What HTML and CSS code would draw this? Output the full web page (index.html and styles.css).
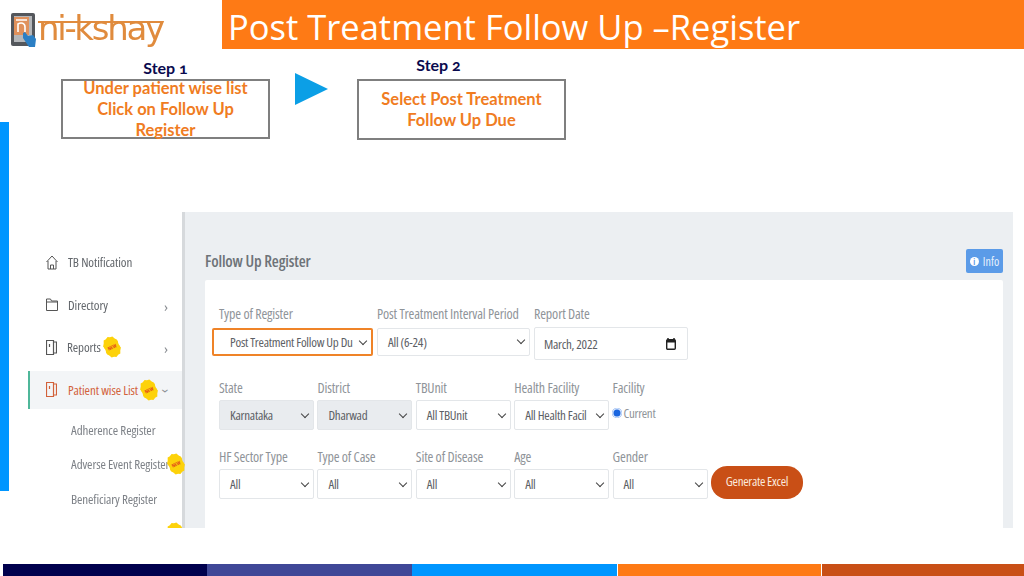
FILE: index.html
```html
<!DOCTYPE html>
<html lang="en">
<head>
    <meta charset="UTF-8">
    <title>Post Treatment Follow Up Register</title>
    <link rel="stylesheet" href="styles.css">
</head>
<body>
    <div class="slide">
        <div class="side-bar"></div>

        <header class="top">
            <div class="logo">
                <svg class="logo-tablet" width="27" height="36" viewBox="0 0 27 36">
                    <rect x="0" y="1" width="24" height="33" rx="2" fill="#54575c"/>
                    <rect x="3" y="4" width="18" height="26" fill="#b5b7ba"/>
                    <rect x="3" y="5" width="15" height="18" fill="#e0915c"/>
                    <path d="M5 8h11M7 20v-8c3-2 7-1 7 3v5" fill="none" stroke="#fff" stroke-width="1.600"/>
                    <path d="M12 21l2-1 3 4 5-1 3 4-1 8h-6l-6-9z" fill="#2b7fc4"/>
                </svg>
                <span class="logo-text">ni-kshay</span>
            </div>
            <h1 class="title">Post Treatment Follow Up –Register</h1>
        </header>

        <section class="steps">
            <div class="step step-one">
                <div class="step-label">Step 1</div>
                <div class="step-box"><p>Under patient wise list<br>Click on Follow Up<br>Register</p></div>
            </div>
            <div class="arrow"></div>
            <div class="step step-two">
                <div class="step-label">Step 2</div>
                <div class="step-box"><p>Select Post Treatment<br>Follow Up Due</p></div>
            </div>
        </section>

        <section class="shot">
            <nav class="menu">
                <div class="menu-item">
                    <svg class="menu-icon" width="12" height="15" viewBox="0 0 12 15"><path d="M.5 7L6 1l5.500 6M2 6v8h8V6M4.500 14v-4h3v4" fill="none" stroke="#555" stroke-width="1"/></svg>
                    <span>TB Notification</span>
                </div>
                <div class="menu-item">
                    <svg class="menu-icon" width="12" height="13" viewBox="0 0 12 13"><path d="M.5 12.500V1h4l1 2h6v9.500zM.5 4h11" fill="none" stroke="#555" stroke-width="1"/></svg>
                    <span>Directory</span>
                    <i class="chev">›</i>
                </div>
                <div class="menu-item">
                    <svg class="menu-icon" width="11" height="15" viewBox="0 0 11 15"><path d="M.5.500h7v14h-7zM7.500 2h3v11h-3M3.500 4v3" fill="none" stroke="#555" stroke-width="1.200"/></svg>
                    <span>Reports</span>
                    <b class="new-badge">NEW</b>
                    <i class="chev">›</i>
                </div>
                <div class="menu-item menu-active">
                    <svg class="menu-icon" width="11" height="15" viewBox="0 0 11 15"><path d="M.5.500h7v14h-7zM7.500 2h3v11h-3M3.500 4v3" fill="none" stroke="#d2613a" stroke-width="1.200"/></svg>
                    <span>Patient wise List</span>
                    <b class="new-badge">NEW</b>
                    <i class="chev chev-down">›</i>
                </div>
                <div class="sub-item sub-first">Adherence Register</div>
                <div class="sub-item">Adverse Event Register<b class="new-badge over">NEW</b></div>
                <div class="sub-item">Beneficiary Register</div>
                <div class="sub-item"><b class="new-badge over"></b></div>
            </nav>

            <main class="content">
                <div class="content-head">
                    <h2>Follow Up Register</h2>
                    <button class="info-btn"><span class="info-dot">i</span>Info</button>
                </div>
                <div class="card">
                    <div class="row row-top">
                        <div class="field field-type">
                            <label>Type of Register</label>
                            <div class="select select-mark"><span>Post Treatment Follow Up Du</span></div>
                        </div>
                        <div class="field field-wide">
                            <label>Post Treatment Interval Period</label>
                            <div class="select"><span>All (6-24)</span></div>
                        </div>
                        <div class="field field-date">
                            <label>Report Date</label>
                            <div class="date-box">
                                <span>March, 2022</span>
                                <svg width="10" height="12" viewBox="0 0 10 12"><path d="M2 0v2M8 0v2" stroke="#222" stroke-width="1.500"/><rect x=".7" y="1.700" width="8.600" height="9.600" rx="1" fill="none" stroke="#222" stroke-width="1.400"/><rect x="1" y="2" width="8" height="2.500" fill="#222"/></svg>
                            </div>
                        </div>
                    </div>
                    <div class="row row-mid">
                        <div class="field"><label>State</label><div class="select select-off"><span>Karnataka</span></div></div>
                        <div class="field"><label>District</label><div class="select select-off"><span>Dharwad</span></div></div>
                        <div class="field"><label>TBUnit</label><div class="select"><span>All TBUnit</span></div></div>
                        <div class="field"><label>Health Facility</label><div class="select"><span>All Health Facil</span></div></div>
                        <div class="field">
                            <label>Facility</label>
                            <div class="radio-line"><i class="radio"></i><span>Current</span></div>
                        </div>
                    </div>
                    <div class="row">
                        <div class="field"><label>HF Sector Type</label><div class="select"><span>All</span></div></div>
                        <div class="field"><label>Type of Case</label><div class="select"><span>All</span></div></div>
                        <div class="field"><label>Site of Disease</label><div class="select"><span>All</span></div></div>
                        <div class="field"><label>Age</label><div class="select"><span>All</span></div></div>
                        <div class="field"><label>Gender</label><div class="select"><span>All</span></div></div>
                        <button class="excel-btn">Generate Excel</button>
                    </div>
                </div>
            </main>
        </section>

        <footer class="stripes">
            <span class="s1"></span><span class="s2"></span><span class="s3"></span><span class="s4"></span><span class="s5"></span>
        </footer>
    </div>
</body>
</html>
```

FILE: styles.css
```css
* {
  margin: 0;
  padding: 0;
  box-sizing: border-box;
}
body {
  background: #fff;
  overflow: hidden;
}
.slide {
  position: relative;
  width: 1024px;
  height: 576px;
  overflow: hidden;
  font-family: "Open Sans", sans-serif;
}
.side-bar {
  position: absolute;
  left: 0;
  top: 122px;
  width: 9px;
  height: 369px;
  background: #0096ff;
}

/* header */
.top {
  display: flex;
  height: 49px;
}
.logo {
  display: flex;
  width: 222px;
  padding: 12px 0 0 11px;
  filter: blur(.4px);
}
.logo-text {
  position: relative;
  height: 44px;
  margin: -6px 0 0 0;
  font-family: "DejaVu Sans", sans-serif;
  font-size: 34px;
  line-height: 44px;
  letter-spacing: -2.300px;
  color: #e08b3d;
}
.logo-text::before {
  content: "";
  position: absolute;
  left: 0;
  right: 0;
  top: 15px;
  height: 2px;
  background: #e08b3d;
}
.title {
  flex: 1;
  height: 49px;
  padding: 4px 0 0 6px;
  background: #fe7a15;
  color: #fff;
  font-size: 34.500px;
  font-weight: 400;
  line-height: 45px;
  white-space: nowrap;
}

/* steps */
.steps {
  display: flex;
  align-items: flex-start;
  height: 163px;
  padding: 10px 0 0 61px;
  font-family: "Lato", sans-serif;
}
.step {
  width: 209px;
}
.step-label {
  padding-bottom: 2px;
  text-align: center;
  color: #0a0a4e;
  font-size: 16px;
  font-weight: 700;
  line-height: 18px;
  font-variant-numeric: oldstyle-nums;
}
.step-two .step-label {
  margin: -3px 46px 0 0;
  padding-bottom: 5px;
}
.step-box {
  height: 60px;
  border: 2px solid #7f7f7f;
  text-align: center;
  color: #f07c22;
  font-size: 16.500px;
  font-weight: 700;
  line-height: 21px;
  white-space: nowrap;
}
.step-box p {
  margin-top: -3px;
}
.step-two .step-box {
  height: 61px;
  padding-top: 11px;
}
.arrow {
  width: 33px;
  height: 32px;
  margin: 14px 29px 0 25px;
  background: #0b9fe6;
  clip-path: polygon(0 0, 100% 50%, 0 100%);
}

/* embedded screenshot */
.shot {
  display: flex;
  width: 985px;
  height: 316px;
  margin-left: 28px;
  overflow: hidden;
  color: #6d7278;
  font-stretch: condensed;
  filter: blur(.35px);
}
.menu {
  position: relative;
  z-index: 1;
  width: 157px;
  flex-shrink: 0;
  border-right: 3px solid #d6d9dc;
  padding-top: 29px;
  font-size: 13px;
  letter-spacing: -.1px;
  color: #62666b;
}
.menu-item {
  display: flex;
  align-items: center;
  height: 42.500px;
  padding-left: 18px;
  position: relative;
}
.menu-icon {
  margin-right: 10px;
  flex-shrink: 0;
}
.menu-active {
  height: 38px;
  margin-top: 2px;
  border-left: 2px solid #4fb79a;
  padding-left: 16px;
  background: #f3f5f7;
  color: #d2613a;
}
.menu-active .menu-icon {
  margin-right: 11px;
}
.chev {
  position: absolute;
  left: 136px;
  top: 15px;
  font-style: normal;
  font-size: 15px;
  line-height: 14px;
  color: #8b8f94;
}
.menu-active .chev {
  left: 135px;
  top: 13px;
}
.chev-down {
  transform: rotate(90deg);
}
.new-badge {
  display: inline-block;
  width: 16px;
  height: 22px;
  margin-left: 3px;
  background: #fdd20a;
  color: #e2491a;
  font-size: 5px;
  letter-spacing: 0;
  line-height: 22px;
  text-align: center;
  flex-shrink: 0;
  transform: rotate(-25deg);
  clip-path: polygon(50% 0, 64% 6%, 80% 7%, 88% 20%, 100% 32%, 95% 50%, 100% 68%, 88% 80%, 80% 93%, 64% 94%, 50% 100%, 36% 94%, 20% 93%, 12% 80%, 0 68%, 5% 50%, 0 32%, 12% 20%, 20% 7%, 36% 6%);
}
.sub-item {
  position: relative;
  height: 34.500px;
  padding-left: 43px;
  line-height: 34.500px;
  white-space: nowrap;
  color: #7d8187;
}
.sub-first {
  margin-top: 4px;
}
.new-badge.over {
  position: absolute;
  left: 140px;
  top: 6px;
  margin: 0;
}
.content {
  flex: 1;
  background: #eceff2;
  padding: 0 10px 0 20px;
}
.content-head {
  display: flex;
  justify-content: space-between;
  height: 68px;
  padding-top: 37px;
}
.content-head h2 {
  font-size: 16px;
  font-weight: 600;
  line-height: 24px;
  letter-spacing: -.15px;
  color: #6e7378;
}
.info-btn {
  display: flex;
  align-items: center;
  justify-content: center;
  gap: 4px;
  width: 37px;
  height: 24px;
  border: 0;
  border-radius: 2px;
  background: #5b9be8;
  color: #e8f1fc;
  font: 400 12px "Open Sans", sans-serif;
  font-stretch: condensed;
}
.info-dot {
  width: 9px;
  height: 9px;
  border-radius: 50%;
  background: #fff;
  color: #5b9be8;
  font-size: 8px;
  font-weight: 700;
  line-height: 9px;
}
.card {
  height: 260px;
  padding: 23px 14px 0 14px;
  background: #fff;
  border-radius: 2px;
}
.row {
  display: flex;
  gap: 3.400px;
  font-size: 14px;
  letter-spacing: -.15px;
}
.row-top {
  gap: 4px;
  margin-bottom: 17px;
}
.row-mid {
  margin-bottom: 16px;
}
.field {
  width: 95px;
  color: #8f9499;
}
.field label {
  display: block;
  height: 23px;
  line-height: 22px;
  white-space: nowrap;
}
.field-type {
  width: 154px;
}
.field-wide {
  width: 153px;
}
.field-date {
  width: 154px;
}
.select {
  position: relative;
  display: flex;
  align-items: center;
  height: 30px;
  padding-left: 10px;
  border: 1px solid #e3e6e9;
  border-radius: 2px;
  background: #fff;
  color: #5c6065;
  font-size: 13px;
  letter-spacing: -.25px;
  white-space: nowrap;
}
.select::after {
  content: "";
  position: absolute;
  right: 5px;
  top: 10px;
  width: 5px;
  height: 5px;
  border-right: 1.500px solid #444;
  border-bottom: 1.500px solid #444;
  transform: rotate(45deg);
}
.select-off {
  background: #e9ecef;
}
.row-top .select {
  height: 28px;
  margin-top: 2px;
}
.row-top .select::after {
  top: 8px;
}
.select-mark {
  width: 161px;
  margin-left: -7px;
  padding-left: 16px;
  border: 2px solid #ef8328;
  background: #fff;
}
.date-box {
  display: flex;
  align-items: center;
  justify-content: space-between;
  height: 33px;
  margin-top: 1px;
  padding: 0 11px 0 9px;
  border: 1px solid #e3e6e9;
  border-radius: 2px;
  color: #5c6065;
  font-size: 13px;
  letter-spacing: -.25px;
}
.radio-line {
  display: flex;
  align-items: center;
  gap: 2px;
  margin-top: 4px;
  font-size: 13px;
  letter-spacing: -.3px;
  color: #8f9499;
}
.radio {
  width: 10px;
  height: 10px;
  margin-left: -1px;
  border-radius: 50%;
  background: #1a66e0;
  box-shadow: inset 0 0 0 1.500px #d7e5fb;
}
.excel-btn {
  width: 92px;
  height: 33px;
  margin-top: 20px;
  padding-bottom: 3px;
  border: 0;
  border-radius: 16px;
  background: #c94f16;
  color: #fbe9dd;
  font: 500 13px "Open Sans", sans-serif;
  font-stretch: condensed;
  letter-spacing: -.3px;
}

/* bottom stripes */
.stripes {
  position: absolute;
  left: 3px;
  right: 0;
  bottom: 0;
  display: grid;
  grid-template-columns: 204px 205px 205px 204px 1fr;
  height: 12px;
}
.s1 { background: #00004d; }
.s2 { background: #3f4797; }
.s3 { background: #0096ff; }
.s4 { background: #fe7a15; border-left: 1px solid #fff; }
.s5 { background: #c94f16; border-left: 1px solid #fff; }
```
